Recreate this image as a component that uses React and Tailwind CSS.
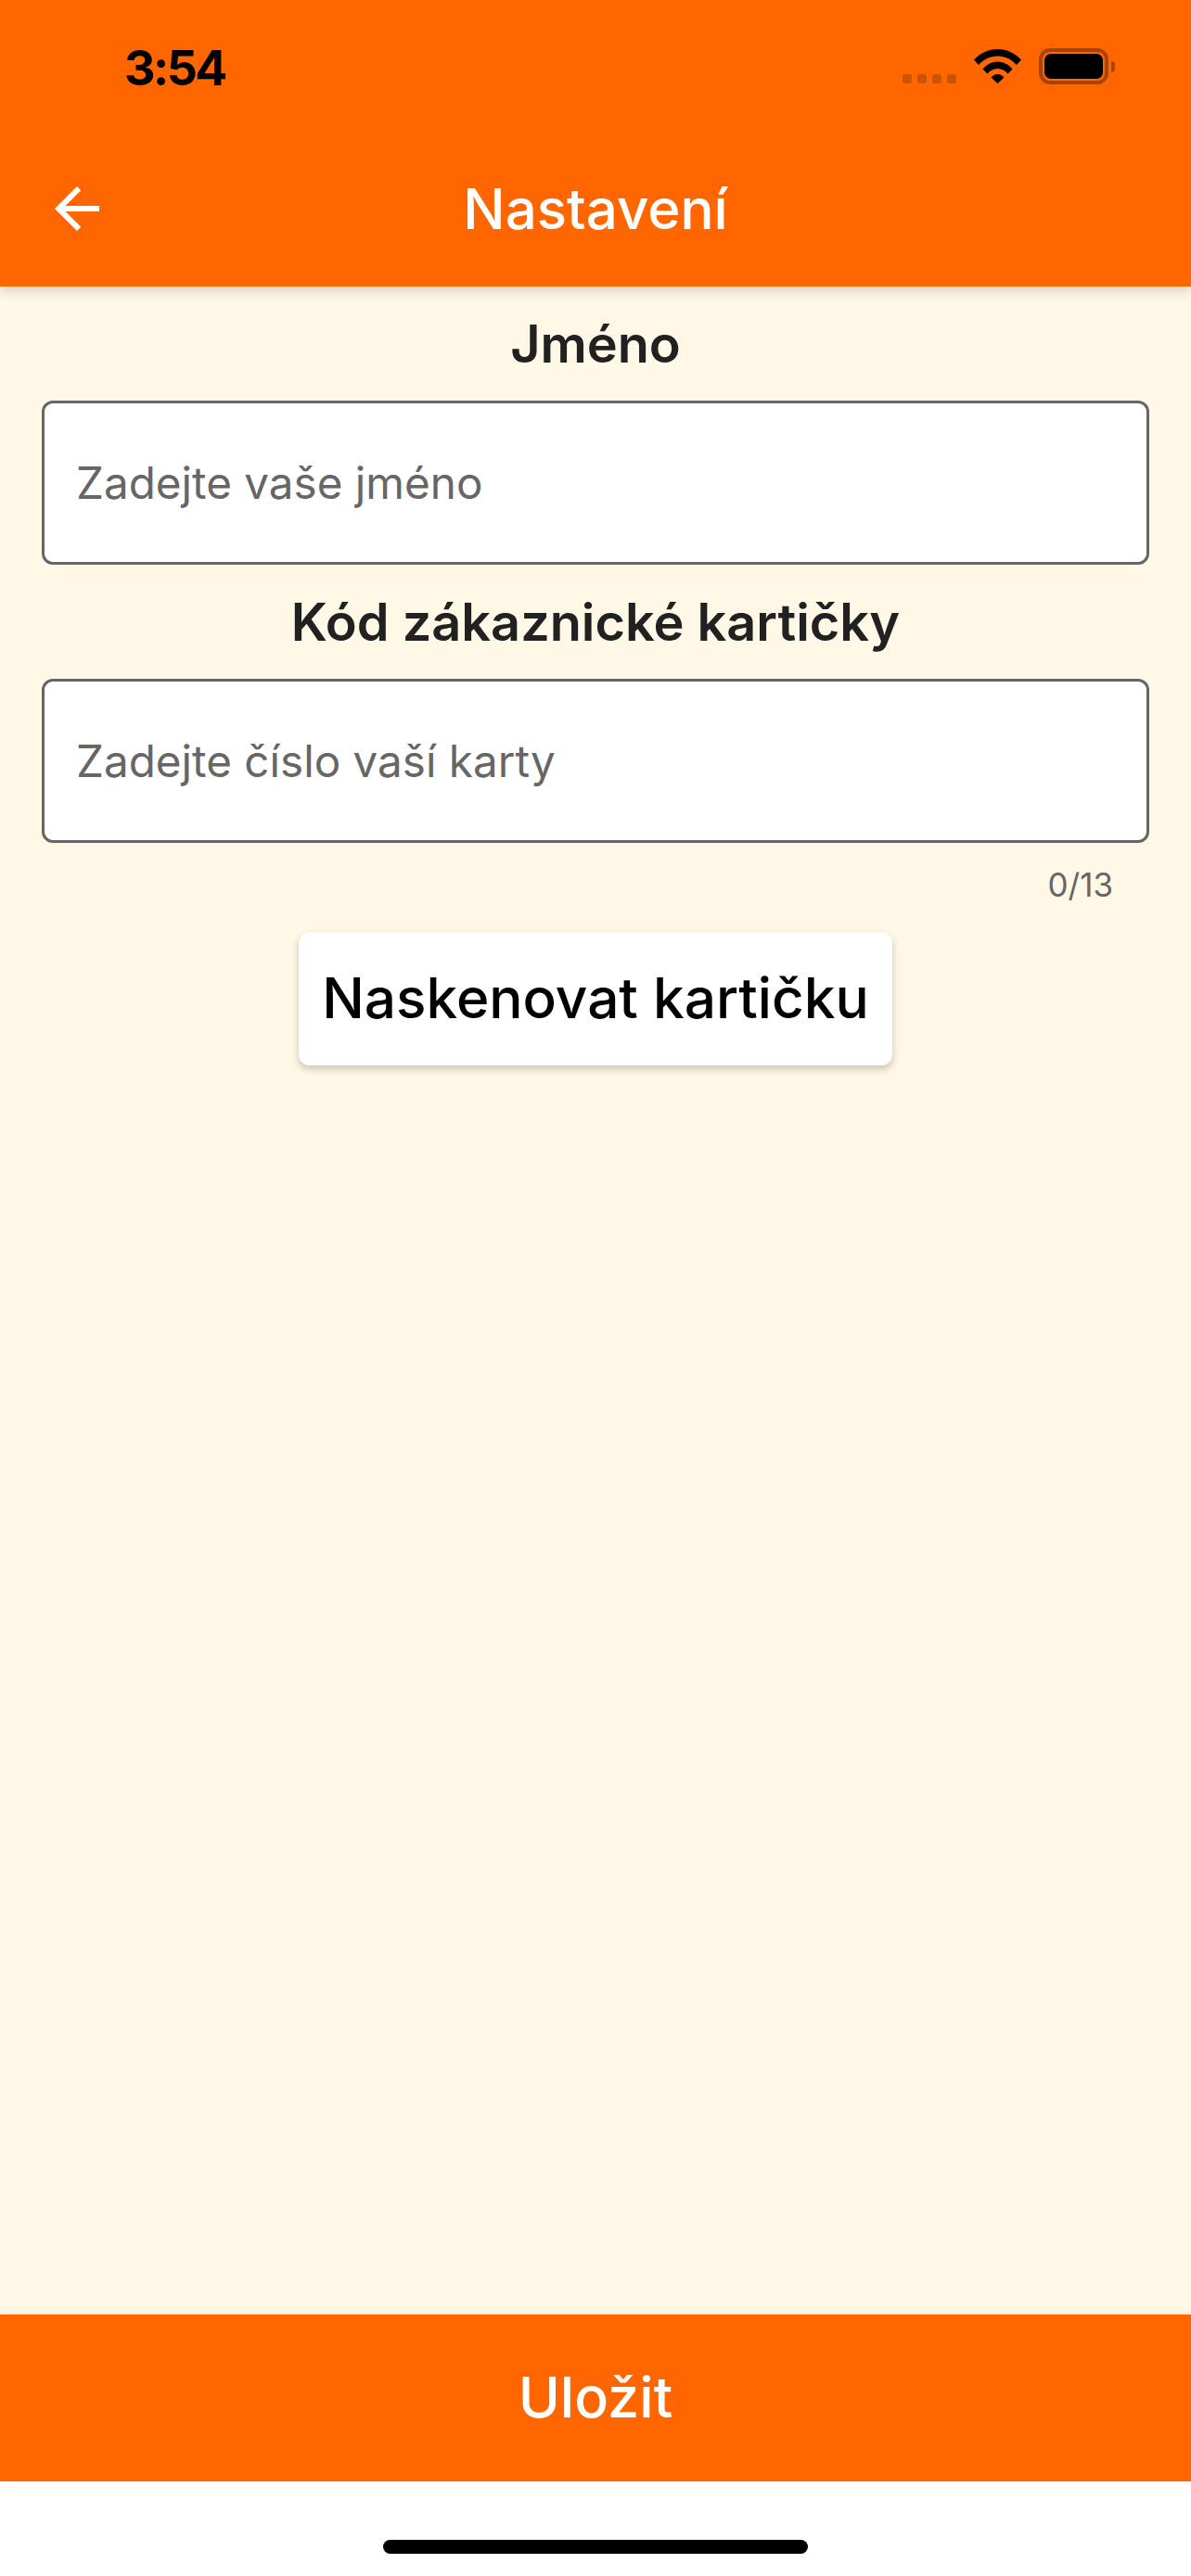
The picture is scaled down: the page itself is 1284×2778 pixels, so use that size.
const font = { fontFamily: "Inter, 'Noto Sans', sans-serif" };

function StatusBar() {
  return (
    <div className="flex h-[132px] items-start justify-between pl-[134px] pr-[82px] pt-[44px] text-black">
      <span className="mt-[2px] text-[52px] font-bold leading-[56px] tracking-[-2.6px]">3:54</span>
      <div className="flex items-start pt-[9px]">
        <div className="mt-[27px] flex gap-[6px]">
          <div className="h-[10px] w-[10px] rounded-[3px] bg-[#c95500]"></div>
          <div className="h-[10px] w-[10px] rounded-[3px] bg-[#c95500]"></div>
          <div className="h-[10px] w-[10px] rounded-[3px] bg-[#c95500]"></div>
          <div className="h-[10px] w-[10px] rounded-[3px] bg-[#c95500]"></div>
        </div>
        {/* wifi */}
        <svg className="ml-[19px] h-[37px] w-[51px]" viewBox="0 0 51 37" fill="#000">
          <path d="M0 11.5C6.5 4.5 15.5 0 25.5 0S44.500 4.500 51 11.500L46 17C40.800 11.200 33.600 7.500 25.500 7.500S10.200 11.200 5 17z" />
          <path d="M9.500 21.500C13.500 16.500 19.200 13.500 25.500 13.500S37.500 16.500 41.500 21.500L36.500 26.500C33.800 23.200 29.900 21 25.500 21S17.200 23.200 14.500 26.500z" />
          <path d="M18.500 30.500C20.300 28.500 22.800 27 25.500 27S30.700 28.500 32.500 30.500L25.500 37z" />
        </svg>
        {/* battery */}
        <div className="ml-[19px] flex items-center">
          <div className="-mt-[1px] h-[39px] w-[75px] rounded-[12px] border-[4px] border-[#a84400] p-[2px]">
            <div className="h-full w-full rounded-[7px] bg-black"></div>
          </div>
          <div className="ml-[3px] h-[12px] w-[4px] rounded-r-full bg-[#a84400]"></div>
        </div>
      </div>
    </div>
  );
}

function Field({ placeholder }) {
  return (
    <div className="mx-[45px] flex h-[177px] items-center rounded-[12px] border-[3px] border-[#666666] bg-white pl-[34px]">
      <span className="text-[47.6px] text-[#666666]">{placeholder}</span>
    </div>
  );
}

export default function App() {
  return (
    <div className="flex h-[2778px] w-[1284px] flex-col bg-white" style={font}>
      <header className="relative z-10 h-[309px] bg-[#ff6600] shadow-[0_6px_12px_rgba(0,0,0,0.14)]">
        <StatusBar />
        <div className="grid grid-cols-[1fr_auto_1fr] items-center pl-[47px] pt-[57px]">
          <svg className="h-[72px] w-[72px]" viewBox="0 0 24 24" fill="#fff">
            <path d="M20 11H7.830l5.590-5.590L12 4l-8 8 8 8 1.410-1.410L7.830 13H20v-2z" />
          </svg>
          <span className="-ml-[47px] text-[60px] font-medium leading-[72px] text-white">Nastavení</span>
          <div></div>
        </div>
      </header>

      <main className="flex flex-1 flex-col bg-[#fff8e7]">
        <h2 className="mt-[28px] h-[95px] text-center text-[55.8px] font-semibold leading-[68px] text-[#212121]">Jméno</h2>
        <Field placeholder="Zadejte vaše jméno" />
        <h2 className="mt-[28px] h-[95px] text-center text-[55.8px] font-semibold leading-[68px] text-[#212121]">Kód zákaznické kartičky</h2>
        <Field placeholder="Zadejte číslo vaší karty" />
        <div className="mt-[23px] pr-[84px] text-right text-[35px] leading-[44px] text-[#666666]">0/13</div>
        <button className="mx-auto mt-[29px] h-[144px] w-[640px] rounded-[12px] bg-white text-[60.3px] font-medium text-black shadow-[0_4px_8px_rgba(0,0,0,0.22)]">
          Naskenovat kartičku
        </button>
      </main>

      <div className="flex h-[180px] items-center justify-center bg-[#ff6600] shadow-[0_-2px_6px_rgba(0,0,0,0.06)]">
        <span className="text-[61px] font-medium text-white">Uložit</span>
      </div>
      <div className="flex h-[102px] justify-center pt-[63px]">
        <div className="h-[15px] w-[458px] rounded-full bg-black"></div>
      </div>
    </div>
  );
}
